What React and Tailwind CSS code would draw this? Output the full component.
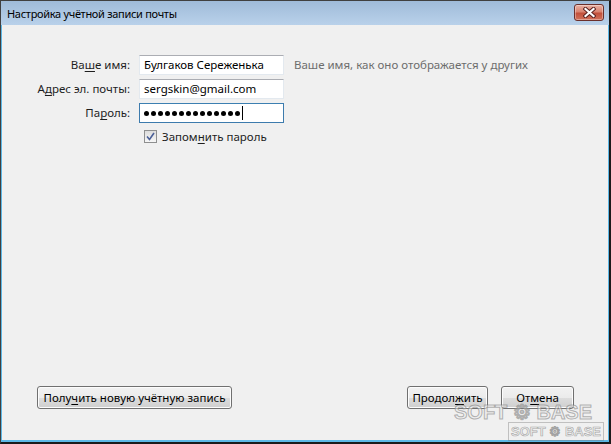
import React from 'react';

const font = { fontFamily: '"Segoe UI", "Noto Sans", sans-serif' };

const U = ({ children }) => <span className="underline underline-offset-2">{children}</span>;

const Button = ({ className = '', children }) => (
  <div
    className={`h-[23px] flex items-center justify-center rounded-[3px] border border-[#707070] bg-[linear-gradient(#f2f2f2_0%,#ebebeb_50%,#dddddd_50%,#cfcfcf_100%)] text-[11.5px] text-black shadow-[inset_0_0_0_1px_#fcfcfc] ${className}`}
  >
    {children}
  </div>
);

const Field = ({ focused, children }) => (
  <div
    className={`h-[20px] w-[145px] flex items-center px-[4px] bg-white border text-[11.5px] text-black ${
      focused ? 'border-[#3d7bad] border-t-[#3c7fb1]' : 'border-[#e3e9ef] border-t-[#abadb3]'
    }`}
  >
    {children}
  </div>
);

export default function App() {
  const dots = Array.from({ length: 14 });
  return (
    <div style={font} className="w-[611px] h-[444px] flex flex-col bg-[#1b1b1b] border-l border-t border-[#404040] border-r-2 border-b-2 border-r-[#1b1b1b] border-b-[#1b1b1b] overflow-hidden relative select-none">
      {/* title bar */}
      <div className="h-[24px] shrink-0 flex items-center justify-between pl-[6px] pr-[5px] bg-[linear-gradient(#9fbbd9,#b9d1ea)]">
        <span className="text-[11px] tracking-[-0.3px] text-black leading-none pt-[1px]">Настройка учётной записи почты</span>
        <div className="w-[30px] h-[17px] -mt-[2px] rounded-[3px] border border-[#6b2f2b] bg-[linear-gradient(#eab1a4_0%,#d98370_45%,#c2503b_55%,#d0715b_100%)] flex items-center justify-center shadow-[inset_0_0_0_1px_rgba(255,255,255,0.35)]">
          <svg width="13" height="11" viewBox="0 0 13 11">
            <path d="M2.5 2 L10.5 9 M10.5 2 L2.5 9" stroke="#5a2220" strokeWidth="4.2" strokeLinecap="square" />
            <path d="M2.5 2 L10.5 9 M10.5 2 L2.5 9" stroke="#ffffff" strokeWidth="2.2" strokeLinecap="square" />
          </svg>
        </div>
      </div>

      {/* client area */}
      <div className="flex-1 flex flex-col bg-[#5db8e6] pl-[1px] pr-[1px] pb-[2px]">
        <div className="flex-1 flex flex-col justify-between bg-[#f0f0f0] pt-[30px] pb-[31px]">
          <div className="grid grid-cols-[128px_145px_auto] gap-x-[9px] gap-y-[4px] items-center text-[11.5px]">
            <div className="text-right text-[#1e1e1e]">Ва<U>ш</U>е имя:</div>
            <Field>Булгаков Сереженька</Field>
            <div className="text-[#6d6d6d] pl-[1px]">Ваше имя, как оно отображается у других</div>

            <div className="text-right text-[#1e1e1e]">А<U>д</U>рес эл. почты:</div>
            <Field>sergskin@gmail.com</Field>
            <div />

            <div className="text-right text-[#1e1e1e]">Па<U>р</U>оль:</div>
            <Field focused>
              <div className="flex items-center gap-[2px]">
                {dots.map((_, i) => (
                  <span key={i} className="w-[5px] h-[5px] rounded-full bg-black" />
                ))}
              </div>
              <span className="ml-[2px] w-[1px] h-[14px] bg-black" />
            </Field>
            <div />

            <div />
            <div className="flex items-center gap-[5px] pl-[5px] pt-[1px]">
              <div className="w-[13px] h-[13px] border border-[#8e8f8f] bg-[linear-gradient(#dcdcdc,#f6f6f6)] flex items-center justify-center">
                <svg width="9" height="9" viewBox="0 0 9 9">
                  <path d="M1 4.5 L3.5 7.5 L8 1" fill="none" stroke="#4a5f97" strokeWidth="1.6" />
                </svg>
              </div>
              <span className="text-[#1e1e1e] whitespace-nowrap">Запом<U>н</U>ить пароль</span>
            </div>
            <div />
          </div>

          <div className="flex items-center pl-[35px] pr-[34px]">
            <Button className="w-[195px]">Полу<U>ч</U>ить новую учётную запись</Button>
            <div className="flex-1" />
            <Button className="w-[81px]">Продол<U>ж</U>ить</Button>
            <Button className="w-[73px] ml-[13px]">От<U>м</U>ена</Button>
          </div>
        </div>
      </div>

      {/* watermark */}
      <div className="absolute left-[453px] top-[401px] text-[20px] font-bold leading-none text-[rgba(235,235,235,0.55)] [-webkit-text-stroke:1px_rgba(120,120,120,0.55)] whitespace-nowrap" style={{ fontFamily: '"Liberation Sans", sans-serif' }}>
        SOFT ⚙ BASE
      </div>
      <div className="absolute left-[507px] top-[421px] text-[13px] font-bold leading-[17px] text-[rgba(235,235,235,0.6)] [-webkit-text-stroke:0.6px_rgba(110,110,110,0.6)] whitespace-nowrap px-[2px] border border-[rgba(120,120,120,0.4)]" style={{ fontFamily: '"Liberation Sans", sans-serif' }}>
        SOFT ⚙ BASE
      </div>
    </div>
  );
}
